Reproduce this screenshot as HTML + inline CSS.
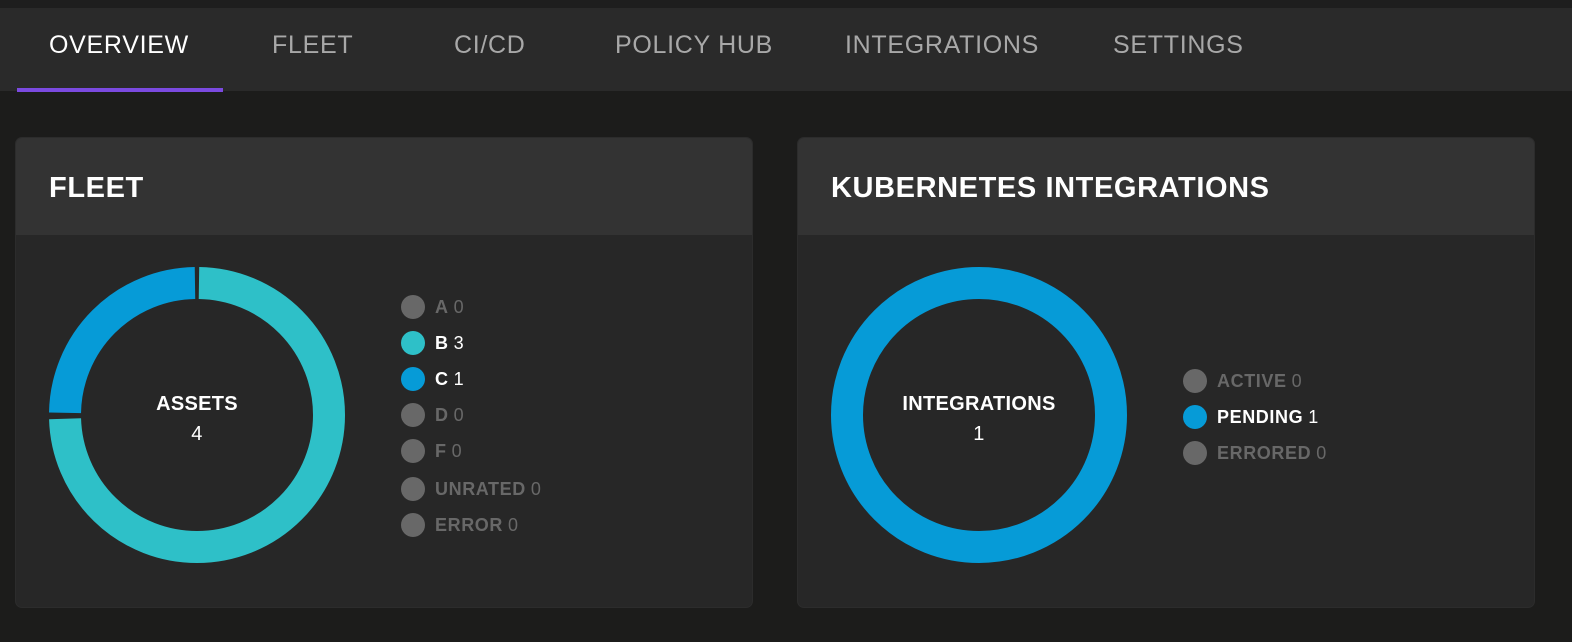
<!DOCTYPE html>
<html><head><style>
body{margin:0;width:1572px;height:642px;background:#1c1c1b;font-family:"Liberation Sans",sans-serif;position:relative;overflow:hidden}
.top{position:absolute;left:0;top:0;width:1572px;height:8px;background:#1e1e1e}
.nav{position:absolute;left:0;top:8px;width:1572px;height:83px;background:#2a2a2a}
.nav span{position:absolute;top:23px;font-size:25px;color:#a8a8a8;letter-spacing:0.7px}
.ul{position:absolute;left:17px;top:88px;width:206px;height:4px;background:#7b4ae0}
.card{position:absolute;top:138px;height:469px;background:#272727;border-radius:6px;overflow:hidden;box-shadow:0 0 0 1px #2c2c2c}
.card .h{height:97px;background:#333;color:#fff;font-weight:bold;font-size:29px;padding-left:33px;line-height:100px;letter-spacing:0.6px}
.lg{position:absolute;font-size:18px;font-weight:bold;color:#686868;height:24px;line-height:24px;padding-left:34px;letter-spacing:0.6px}
.lg::before{content:"";position:absolute;left:0;top:0;width:24px;height:24px;border-radius:50%;background:var(--c,#686868)}
.lg b{font-weight:normal;margin-left:5px}
.on{color:#fff}
.ct{position:absolute;color:#fff;text-align:center;font-size:20px;letter-spacing:0.3px}
</style></head><body>
<div class="top"></div>
<div class="nav">
<span style="left:49px;color:#fff">OVERVIEW</span>
<span style="left:272px">FLEET</span>
<span style="left:454px">CI/CD</span>
<span style="left:615px">POLICY HUB</span>
<span style="left:845px">INTEGRATIONS</span>
<span style="left:1113px">SETTINGS</span>
</div>
<div class="ul"></div>
<div class="card" style="left:16px;width:736px"><div class="h">FLEET</div></div>
<div class="card" style="left:798px;width:736px"><div class="h">KUBERNETES INTEGRATIONS</div></div>
<svg style="position:absolute;left:0;top:0" width="1572" height="642">
<g transform="translate(197,415) rotate(-90)">
<circle r="132" fill="none" stroke="#2ec0c8" stroke-width="32" stroke-dasharray="616 213.4" stroke-dashoffset="-2"/>
<circle r="132" fill="none" stroke="#069bd7" stroke-width="32" stroke-dasharray="203 626.4" stroke-dashoffset="-624"/>
</g>
<circle cx="979" cy="415" r="132" fill="none" stroke="#069bd7" stroke-width="32"/>
</svg>
<div class="ct" style="left:97px;width:200px;top:393px"><b>ASSETS</b><br><span style="line-height:36px">4</span></div>
<div class="ct" style="left:879px;width:200px;top:393px"><b>INTEGRATIONS</b><br><span style="line-height:36px">1</span></div>
<div class="lg" style="left:401px;top:295px">A<b>0</b></div>
<div class="lg on" style="left:401px;top:331px;--c:#2ec0c8">B<b>3</b></div>
<div class="lg on" style="left:401px;top:367px;--c:#069bd7">C<b>1</b></div>
<div class="lg" style="left:401px;top:403px">D<b>0</b></div>
<div class="lg" style="left:401px;top:439px">F<b>0</b></div>
<div class="lg" style="left:401px;top:477px">UNRATED<b>0</b></div>
<div class="lg" style="left:401px;top:513px">ERROR<b>0</b></div>
<div class="lg" style="left:1183px;top:369px">ACTIVE<b>0</b></div>
<div class="lg on" style="left:1183px;top:405px;--c:#069bd7">PENDING<b>1</b></div>
<div class="lg" style="left:1183px;top:441px">ERRORED<b>0</b></div>
</body></html>
